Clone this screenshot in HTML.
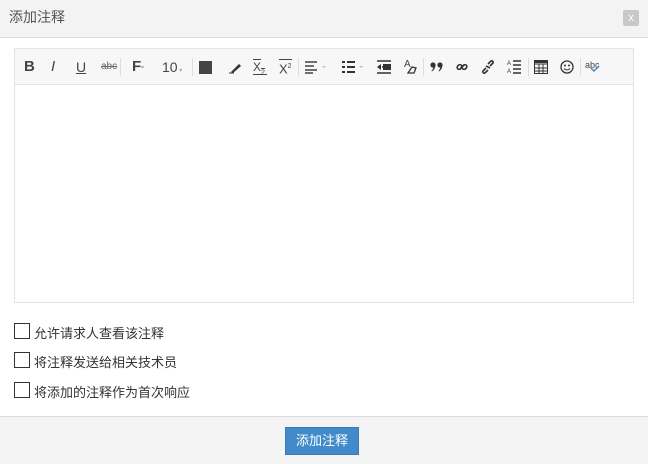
<!DOCTYPE html>
<html><head><meta charset="utf-8">
<style>
*{margin:0;padding:0;box-sizing:border-box}
body{width:648px;height:464px;background:#fff;position:relative;overflow:hidden;font-family:"Liberation Sans","Noto Sans CJK SC",sans-serif;color:#333}
.hd{position:absolute;left:0;top:0;width:648px;height:38px;background:#f3f3f3;border-bottom:1px solid #ddd}
.hd .t{position:absolute;left:9px;top:7px;font-size:14px;color:#555}
.x{position:absolute;left:623px;top:10px;width:16px;height:16px;background:#c8c8c8;color:#fff;font-size:11px;text-align:center;line-height:16px;border-radius:2px}
.ed{position:absolute;left:14px;top:48px;width:620px;height:255px;border:1px solid #e3e3e3}
.tb{position:absolute;left:0;top:0;width:618px;height:36px;background:#f7f7f7;border-bottom:1px solid #e3e3e3}
.i{position:absolute;top:10px;font-size:14px;color:#444;line-height:16px}
.sep{position:absolute;top:9px;width:1px;height:18px;background:#ddd}
svg{position:absolute}
.cb{position:absolute;left:14px;width:16px;height:16px;border:1px solid #333;background:#fff}
.lb{position:absolute;left:34px;font-size:13px;color:#333}
.ft{position:absolute;left:0;top:416px;width:648px;height:48px;background:#f4f4f4;border-top:1px solid #ddd}
.btn{position:absolute;left:285px;top:10px;width:74px;height:28px;background:#428bca;border:1px solid #3a7ab5;color:#fff;font-size:13px;text-align:center;line-height:26px}
</style></head><body>
<div class="hd"><span class="t">添加注释</span><div class="x">x</div></div>
<div class="ed"><div class="tb">
<span class="i" style="left:9px;font-weight:bold;font-size:15px">B</span>
<span class="i" style="left:36px;font-style:italic;font-size:15px">I</span>
<span class="i" style="left:61px;text-decoration:underline;font-size:14px">U</span>
<span class="i" style="left:86px;font-size:10px;text-decoration:line-through;color:#666">abc</span>
<div class="sep" style="left:105px"></div>
<span class="i" style="left:117px;font-weight:bold;font-size:15px">F<span style="font-size:8px;vertical-align:top">-</span></span>
<span class="i" style="left:147px;font-size:14px">10<span style="font-size:6px;color:#aaa"> ▾</span></span>
<div class="sep" style="left:177px"></div>
<div style="position:absolute;left:184px;top:12px;width:13px;height:13px;background:#444"></div>
<svg style="left:213px;top:11px" width="14" height="14"><path d="M3 12 L11 4 L13 6 L5 13 Z" fill="#333"/><path d="M1 13 H6" stroke="#333"/></svg>
<span class="i" style="left:238px;font-size:12px;text-decoration:overline">X<sub style="font-size:7px">2</sub></span>
<div style="position:absolute;left:238px;top:25px;width:14px;height:1px;background:#444"></div>
<span class="i" style="left:264px;font-size:13px;border-top:1px solid #444;line-height:14px">X<sup style="font-size:7px">2</sup></span>
<div class="sep" style="left:283px"></div>
<svg style="left:290px;top:11px" width="24" height="14"><path d="M0 2H12M0 6H9M0 10H12M0 13H8" stroke="#444" stroke-width="1.5"/><path d="M17 6l2 2 2-2z" fill="#bbb"/></svg>
<svg style="left:326px;top:11px" width="24" height="14"><path d="M1 2h3M1 7h3M1 12h3M6 2h8M6 7h8M6 12h8" stroke="#333" stroke-width="2"/><path d="M18 6l2 2 2-2z" fill="#bbb"/></svg>
<svg style="left:362px;top:11px" width="14" height="14"><path d="M0 1H14M5 7H14M0 13H14" stroke="#333" stroke-width="1.5"/><rect x="6" y="4" width="8" height="6" fill="#333"/><path d="M0 7L4 4V10Z" fill="#333"/></svg>
<span class="i" style="left:389px;top:8px;font-size:10px">A</span>
<svg style="left:392px;top:16px" width="10" height="9"><path d="M1 8 L5 2 L9 3 L7 8Z" fill="none" stroke="#333" stroke-width="1.3"/></svg>
<div class="sep" style="left:408px"></div>
<svg style="left:415px;top:13px" width="14" height="10"><circle cx="3" cy="3" r="2.6" fill="#333"/><path d="M5.4 3 Q5.5 7 2 9.5 L1.5 8.8 Q3.5 7 3.5 4Z" fill="#333"/><circle cx="10" cy="3" r="2.6" fill="#333"/><path d="M12.4 3 Q12.5 7 9 9.5 L8.5 8.8 Q10.5 7 10.5 4Z" fill="#333"/></svg>
<svg style="left:440px;top:11px" width="14" height="14"><g fill="none" stroke="#333" stroke-width="1.6"><path d="M5 9 L9 5"/><rect x="2" y="5" width="5" height="4" rx="2" transform="rotate(-45 4.5 7)"/><rect x="7" y="5" width="5" height="4" rx="2" transform="rotate(-45 9.5 7)"/></g></svg>
<svg style="left:466px;top:11px" width="14" height="14"><g fill="none" stroke="#333" stroke-width="1.6"><path d="M5 8 L2 11 A1.5 1.5 0 0 0 4 13 L7 10"/><path d="M9 6 L12 3 A1.5 1.5 0 0 0 10 1 L7 4"/><path d="M5 6 L9 8"/></g></svg>
<svg style="left:492px;top:10px" width="14" height="16"><text x="0" y="6" font-size="6" fill="#333" font-family="Liberation Sans">A</text><text x="0" y="14" font-size="6" fill="#333" font-family="Liberation Sans">A</text><path d="M6 2H14M6 6H14M6 10H14M6 14H14" stroke="#333" stroke-width="1.4"/></svg>
<div class="sep" style="left:513px"></div>
<svg style="left:519px;top:11px" width="14" height="14"><rect x="0.5" y="0.5" width="13" height="13" fill="none" stroke="#333"/><path d="M0 4H14M5 4V14M9 4V14M0 8H14M0 11H14" stroke="#333"/><rect x="0" y="0" width="14" height="3" fill="#333"/></svg>
<svg style="left:545px;top:11px" width="14" height="14"><circle cx="7" cy="7" r="6" fill="none" stroke="#333" stroke-width="1.3"/><circle cx="5" cy="5.5" r="1" fill="#333"/><circle cx="9" cy="5.5" r="1" fill="#333"/><path d="M4 8.5 Q7 11.5 10 8.5" fill="none" stroke="#333"/></svg>
<div class="sep" style="left:565px"></div>
<span class="i" style="left:570px;top:8px;font-size:9px;color:#444">abc</span>
<svg style="left:575px;top:16px" width="10" height="8"><path d="M1 3 L4 6 L9 1" fill="none" stroke="#428bca" stroke-width="1.5"/></svg>
</div></div>
<div class="cb" style="top:323px"></div><span class="lb" style="top:323px">允许请求人查看该注释</span>
<div class="cb" style="top:352px"></div><span class="lb" style="top:352px">将注释发送给相关技术员</span>
<div class="cb" style="top:382px"></div><span class="lb" style="top:382px">将添加的注释作为首次响应</span>
<div class="ft"><div class="btn">添加注释</div></div>
</body></html>
